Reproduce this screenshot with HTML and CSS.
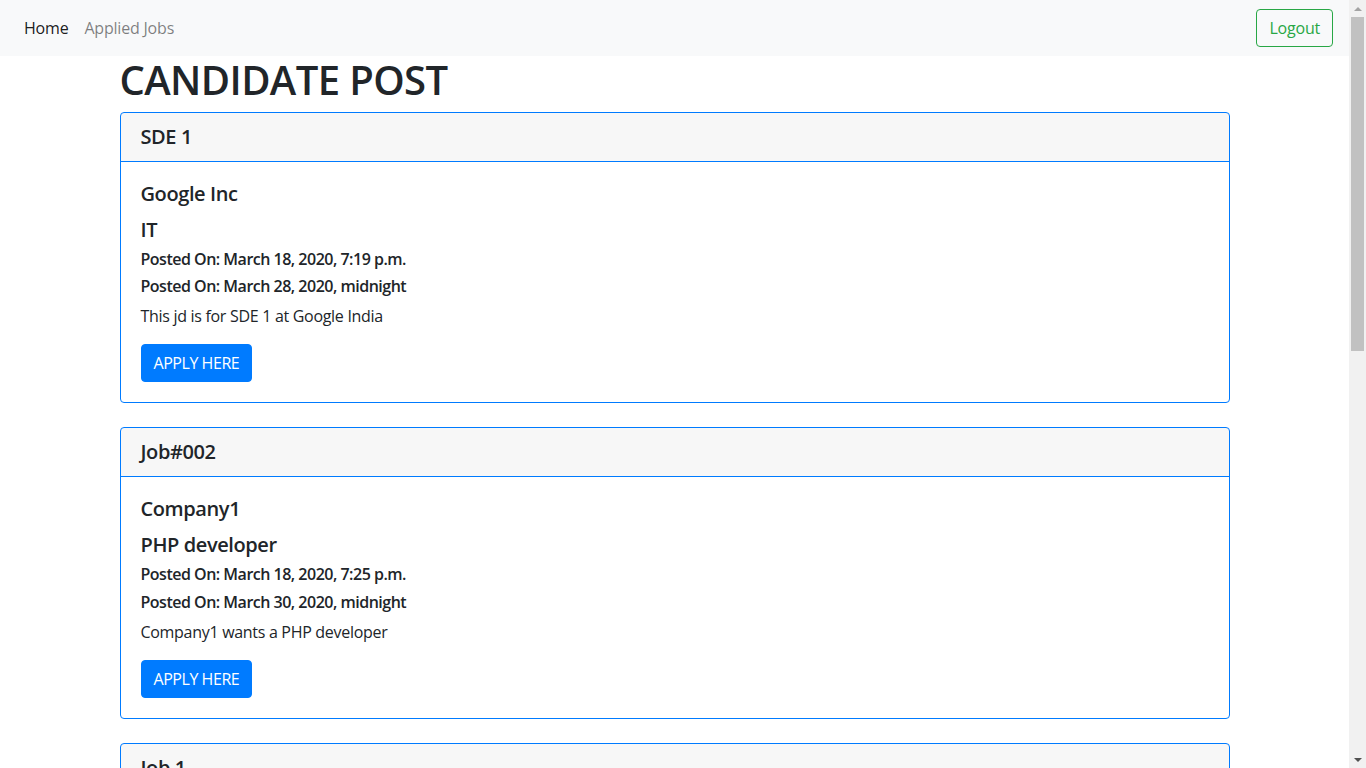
FILE: index.html
```html
<!DOCTYPE html>
<html lang="en">
<head>
<meta charset="utf-8">
<title>Candidate Post</title>
<link rel="stylesheet" href="styles.css">
</head>
<body>
<div class="page">
  <nav class="navbar">
    <ul class="nav-links">
      <li><a class="nav-link active" href="#">Home</a></li>
      <li><a class="nav-link" href="#">Applied Jobs</a></li>
    </ul>
    <a class="btn btn-outline-success" href="#">Logout</a>
  </nav>
  <main class="container">
    <h1 class="page-title">CANDIDATE POST</h1>

    <section class="card">
      <div class="card-header"><h5 class="header-title">SDE 1</h5></div>
      <div class="card-body">
        <h5 class="card-title">Google Inc</h5>
        <h5 class="card-sub">IT</h5>
        <h6 class="meta">Posted On: March 18, 2020, 7:19 p.m.</h6>
        <h6 class="meta">Posted On: March 28, 2020, midnight</h6>
        <p class="card-text">This jd is for SDE 1 at Google India</p>
        <a class="btn btn-primary" href="#">APPLY HERE</a>
      </div>
    </section>

    <section class="card">
      <div class="card-header"><h5 class="header-title">Job#002</h5></div>
      <div class="card-body">
        <h5 class="card-title">Company1</h5>
        <h5 class="card-sub">PHP developer</h5>
        <h6 class="meta">Posted On: March 18, 2020, 7:25 p.m.</h6>
        <h6 class="meta">Posted On: March 30, 2020, midnight</h6>
        <p class="card-text">Company1 wants a PHP developer</p>
        <a class="btn btn-primary" href="#">APPLY HERE</a>
      </div>
    </section>

    <section class="card">
      <div class="card-header"><h5 class="header-title">Job 1</h5></div>
    </section>
  </main>
</div>
<div class="scrollbar" aria-hidden="true">
  <div class="sb-button"><span class="arrow-up"></span></div>
  <div class="sb-thumb"></div>
  <div class="sb-track"></div>
  <div class="sb-button"><span class="arrow-down"></span></div>
</div>
</body>
</html>
```

FILE: styles.css
```css
* { box-sizing: border-box; }

html, body { height: 100%; }

body {
  margin: 0;
  display: flex;
  overflow: hidden;
  font-family: "Open Sans", "Noto Sans", sans-serif;
  font-size: 16px;
  line-height: 1.5;
  color: #212529;
  background: #fff;
}

h1, h5, h6, p { margin: 0; }

.page {
  flex: 1;
  min-width: 0;
  height: 100%;
  overflow: hidden;
}

/* fake browser scrollbar */
.scrollbar {
  width: 17px;
  flex: none;
  height: 100%;
  display: flex;
  flex-direction: column;
  background: #f1f1f1;
}
.sb-button {
  height: 17px;
  flex: none;
  display: flex;
  align-items: center;
  justify-content: center;
}
.arrow-up {
  width: 0;
  height: 0;
  border-left: 4px solid transparent;
  border-right: 4px solid transparent;
  border-bottom: 4px solid #a3a3a3;
}
.arrow-down {
  width: 0;
  height: 0;
  border-left: 4px solid transparent;
  border-right: 4px solid transparent;
  border-top: 4px solid #505050;
}
.sb-thumb {
  height: 334px;
  flex: none;
  margin: 0 2px;
  background: #c1c1c1;
}
.sb-track { flex: 1; }

.navbar {
  display: flex;
  align-items: center;
  justify-content: space-between;
  padding: 8px 16px;
  background: #f8f9fa;
}
.nav-links {
  display: flex;
  list-style: none;
  margin: 0;
  padding: 0;
}
.nav-link {
  display: block;
  padding: 8px;
  color: rgba(0, 0, 0, 0.5);
  text-decoration: none;
  letter-spacing: -0.2px;
}
.nav-link.active { color: rgba(0, 0, 0, 0.9); }

.btn {
  display: inline-block;
  padding: 6px 12px;
  font-size: 16px;
  line-height: 1.5;
  border: 1px solid transparent;
  border-radius: 4px;
  text-decoration: none;
}
.btn-outline-success {
  color: #28a745;
  border-color: #28a745;
  letter-spacing: -0.2px;
}
.btn-primary {
  color: #fff;
  background: #007bff;
  border-color: #007bff;
  letter-spacing: -0.45px;
}

.container {
  max-width: 1140px;
  margin: 0 auto;
  padding: 0 15px;
}

.page-title {
  font-size: 40px;
  font-weight: 600;
  line-height: 1.2;
  margin-bottom: 8px;
  letter-spacing: -0.6px;
}

.card {
  border: 1px solid #007bff;
  border-radius: 4px;
  margin-bottom: 24px;
  overflow: hidden;
}
.card-header {
  padding: 12px 20px;
  background: rgba(0, 0, 0, 0.03);
  border-bottom: 1px solid #007bff;
}
.header-title,
.card-title,
.card-sub {
  font-size: 20px;
  font-weight: 600;
  line-height: 1.2;
  letter-spacing: -0.4px;
}
.card-body { padding: 20px; }
.card-title { margin-bottom: 12px; }
.card-sub { margin-bottom: 8px; }
.meta {
  font-size: 16px;
  font-weight: 600;
  line-height: 1.2;
  margin-bottom: 8px;
  letter-spacing: -0.5px;
}
.card-text {
  margin-bottom: 16px;
  letter-spacing: -0.3px;
}
```
